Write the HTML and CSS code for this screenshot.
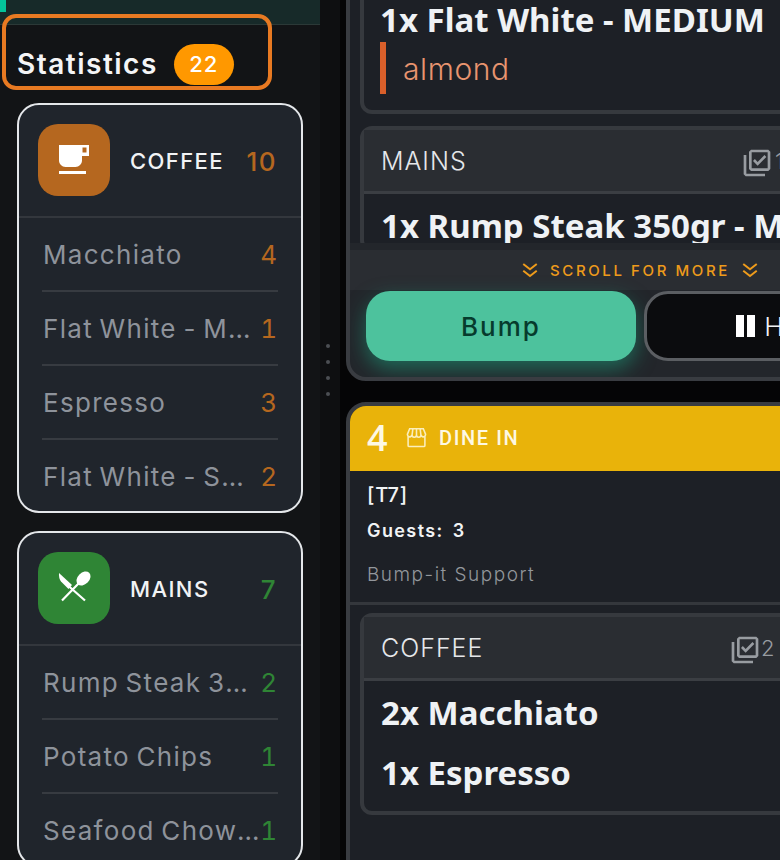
FILE: index.html
```html
<!DOCTYPE html>
<html lang="en">
<head>
<meta charset="utf-8">
<title>Kitchen display</title>
<link rel="stylesheet" href="styles.css">
</head>
<body>
<div class="app">
  <aside class="side">
    <div class="topbar"><span class="topmark"></span></div>
    <div class="focus-ring"></div>
    <div class="title"><span class="title-text">Statistics</span><span class="pill">22</span></div>
    <section class="stat">
      <header class="stat-hd">
        <span class="tile tile-coffee">
          <svg class="tile-svg" viewBox="0 0 36 36"><path fill-rule="evenodd" fill="#fff" d="M3 3H33V14H26V18.500C26 22 23 25 19.500 25H9.500C6 25 3 22 3 18.500ZM26.500 5.500V10.500H30.500V5.500Z"/><rect x="3" y="29" width="27" height="3" fill="#fff"/></svg>
        </span>
        <span class="stat-name">COFFEE</span>
        <span class="stat-total c-coffee">10</span>
      </header>
      <div class="row"><span class="row-name">Macchiato</span><span class="row-num c-coffee">4</span></div>
      <div class="row"><span class="row-name">Flat White - MEDIUM</span><span class="row-num c-coffee">1</span></div>
      <div class="row"><span class="row-name">Espresso</span><span class="row-num c-coffee">3</span></div>
      <div class="row"><span class="row-name">Flat White - SMALL</span><span class="row-num c-coffee">2</span></div>
    </section>
    <section class="stat">
      <header class="stat-hd">
        <span class="tile tile-mains">
          <svg class="tile-svg" viewBox="0 0 36 36"><ellipse cx="27.500" cy="8.500" rx="8" ry="5.800" transform="rotate(-45 27.500 8.500)" fill="#fff"/><path d="M23 13L6 30.500M12 15.500L29 30.500" stroke="#fff" stroke-width="2.200" fill="none"/><path d="M3 3L16 15L12.500 19L5 11.500Q2.500 8 3 3Z" fill="#fff"/></svg>
        </span>
        <span class="stat-name">MAINS</span>
        <span class="stat-total c-mains">7</span>
      </header>
      <div class="row"><span class="row-name">Rump Steak 350gr - MEDIUM</span><span class="row-num c-mains">2</span></div>
      <div class="row"><span class="row-name">Potato Chips</span><span class="row-num c-mains">1</span></div>
      <div class="row"><span class="row-name">Seafood Chowder Bowl</span><span class="row-num c-mains">1</span></div>
    </section>
    <div class="handle"><i></i><i></i><i></i><i></i></div>
  </aside>
  <main class="board">
    <article class="card card-first">
      <div class="scroll">
        <section class="group group-cut">
          <div class="item">1x Flat White - MEDIUM</div>
          <div class="mod">almond</div>
        </section>
        <section class="group">
          <header class="group-hd group-hd-wide">
            <span class="group-name">MAINS</span>
            <svg class="check" viewBox="0 0 24 24"><path fill="#989ca1" d="M20 4v12H8V4h12m.5-2h-13L6 3.500v13L7.500 18h13l1.500-1.500v-13L20.500 2zM12.470 14L9 10.500l1.400-1.410 2.070 2.080L17.600 6 19 7.410 12.470 14zM4 6H2v14.500L3.500 22H18v-2H4V6z"/></svg>
            <span class="group-count">1</span>
          </header>
          <div class="item item-first">1x Rump Steak 350gr - MEDIUM</div>
        </section>
      </div>
      <div class="more">
        <svg class="chev" viewBox="0 0 24 24"><path d="M3 4l9 7 9-7M3 13l9 7 9-7"/></svg>
        <span class="more-text">SCROLL FOR MORE</span>
        <svg class="chev" viewBox="0 0 24 24"><path d="M3 4l9 7 9-7M3 13l9 7 9-7"/></svg>
      </div>
      <div class="actions">
        <button class="btn btn-bump">Bump</button>
        <button class="btn btn-hold"><span class="pause"><i></i><i></i></span>Hold</button>
      </div>
    </article>
    <article class="card card-second">
      <header class="banner">
        <span class="banner-num">4</span>
        <svg class="store" viewBox="0 0 20 20"><path d="M2 9V17.500a1 1 0 0 0 1 1H17a1 1 0 0 0 1-1V9M3.500 1.700H16.500L18.500 6.500a2.100 2.100 0 0 1-4.250 1.200a2.100 2.100 0 0 1-4.250 0a2.100 2.100 0 0 1-4.250 0a2.100 2.100 0 0 1-4.250-1.200ZM6.500 2L5.800 7.500M10 2V7.500M13.500 2L14.200 7.500"/></svg>
        <span class="banner-type">DINE IN</span>
      </header>
      <div class="info">
        <div class="table">[T7]</div>
        <div class="guests"><span>Guests:</span><span>3</span></div>
        <div class="server">Bump-it Support</div>
      </div>
      <section class="group group-tight">
        <header class="group-hd group-hd-narrow">
          <span class="group-name">COFFEE</span>
          <svg class="check" viewBox="0 0 24 24"><path fill="#989ca1" d="M20 4v12H8V4h12m.5-2h-13L6 3.500v13L7.500 18h13l1.500-1.500v-13L20.500 2zM12.470 14L9 10.500l1.400-1.410 2.070 2.080L17.600 6 19 7.410 12.470 14zM4 6H2v14.500L3.500 22H18v-2H4V6z"/></svg>
          <span class="group-count">2</span>
        </header>
        <div class="item item-list">2x Macchiato</div>
        <div class="item item-list">1x Espresso</div>
      </section>
    </article>
  </main>
</div>
</body>
</html>
```
FILE: styles.css
```css
* { box-sizing: border-box; }
html, body { margin: 0; height: 100%; overflow: hidden; background: #050506; }
body { font-family: "Inter", "Liberation Sans", sans-serif; color: #f1f3f5; }
.app { display: flex; width: 780px; height: 860px; overflow: hidden; }

/* sidebar */
.side { position: relative; flex: 0 0 340px; height: 860px; padding-right: 20px; background: #0e0f11; overflow: hidden; }
.topbar { height: 25px; background: #172a29; border-bottom: 1px solid #2b3937; }
.topmark { display: block; width: 6px; height: 12px; background: #04c39a; }
.side::before { content: ""; position: absolute; left: 0; top: 25px; width: 320px; bottom: 0; background: #121416; }
.focus-ring { position: absolute; left: 2px; top: 14px; width: 270px; height: 76px; border: 4px solid #e87a22; border-radius: 14px; z-index: 2; }
.title { position: relative; display: flex; align-items: center; gap: 16px; height: 78px; padding-left: 17px; }
.title-text { font-size: 28px; font-weight: 600; letter-spacing: 1.500px; color: #f4f5f6; }
.pill { display: flex; align-items: center; justify-content: center; width: 60px; height: 41px; border-radius: 21px; background: #ff9800; font-size: 22px; font-weight: 500; letter-spacing: 1px; color: #fff; }
.stat { position: relative; width: 286px; margin: 0 0 18px 17px; background: #20252c; border: 2px solid #e4e7ea; border-radius: 22px; }
.stat-hd { display: flex; align-items: center; height: 113px; padding: 0 24px 2px 19px; border-bottom: 2px solid #33373d; }
.tile { display: flex; align-items: center; justify-content: center; flex: none; width: 72px; height: 72px; border-radius: 20px; }
.tile-coffee { background: #b5671f; }
.tile-mains { background: #2f8535; }
.tile-svg { width: 36px; height: 36px; }
.stat-name { margin: 2px 0 0 20px; font-size: 22px; font-weight: 500; letter-spacing: 1.400px; color: #f1f3f5; }
.stat-total { margin: 3px 0 0 auto; font-size: 26px; font-weight: 500; letter-spacing: 1.500px; }
.c-coffee { color: #b5671f; }
.c-mains { color: #2f8535; }
.row { display: flex; align-items: center; height: 74px; margin: 0 23px; padding: 0 1px; border-bottom: 2px solid #373b41; font-size: 26px; letter-spacing: 1.300px; word-spacing: -2px; color: #8e939b; }
.row:last-child { height: 71px; padding-top: 2px; border-bottom: 0; }
.row-name { flex: 1; min-width: 0; overflow: hidden; white-space: nowrap; text-overflow: ellipsis; }
.row-num { flex: none; letter-spacing: 0; font-weight: 400; font-variant-numeric: tabular-nums; }
.handle { position: absolute; left: 326px; top: 344px; display: flex; flex-direction: column; gap: 12px; }
.handle i { display: block; width: 4px; height: 4px; border-radius: 50%; background: #4b4e53; }

/* board */
.board { flex: 0 0 auto; width: 594px; padding-left: 6px; }
.card { width: 588px; background: #1d2026; border: 4px solid #393c41; border-radius: 20px; overflow: hidden; }
.card-first { height: 411px; margin-top: -30px; background: #23262b; }
.card-second { margin-top: 21px; height: 600px; }
.scroll { height: 269px; margin-bottom: 7px; padding: 0 10px; overflow: hidden; background: #1d2026; }
.group { background: #1d2026; border: 4px solid #36393e; border-radius: 12px; }
.group-cut { height: 140px; margin-bottom: 12px; padding: 24px 16px 0; border-top: 0; border-radius: 0 0 12px 12px; }
.group-tight { height: 202px; margin: 8px 10px 0; }
.group-hd { display: flex; align-items: center; height: 64px; padding-left: 17px; background: #2a2d32; border-bottom: 3px solid #3b3e43; }
.group-hd-wide { padding-right: 129px; }
.group-hd-wide .group-count { margin-left: 2px; }
.group-hd-narrow { padding-right: 143px; }
.group-name { margin-right: auto; font-size: 25px; font-weight: 300; letter-spacing: 1px; color: #e5e7ea; }
.check { width: 32px; height: 32px; flex: none; margin-top: 4px; }
.group-count { width: 12px; font-size: 22px; font-weight: 300; color: #989ca1; }
.item { font-family: "Noto Sans", "Open Sans", sans-serif; font-size: 33px; font-weight: 700; line-height: 44px; color: #eff2f5; white-space: nowrap; }
.item-first { padding: 10px 0 0 17px; }
.item-list { padding-left: 17px; height: 60px; line-height: 60px; }
.group-hd + .item-list { margin-top: 2px; }
.mod { height: 52px; padding-left: 17px; border-left: 6px solid #d95f2a; font-size: 30px; font-weight: 300; line-height: 54px; letter-spacing: .6px; color: #e8946f; }
.more { display: flex; align-items: center; justify-content: center; gap: 11px; height: 40px; background: #2a2d32; }
.chev { width: 18px; height: 18px; fill: none; stroke: #ee9b1b; stroke-width: 2.600; }
.more-text { font-size: 15px; font-weight: 500; letter-spacing: 2.600px; color: #ee9b1b; }
.actions { display: flex; gap: 9px; padding: 1px 15px 0 16px; }
.btn { display: flex; align-items: center; justify-content: center; flex: none; width: 270px; height: 70px; border-radius: 24px; font-family: inherit; font-size: 26px; }
.btn-bump { border: 0; background: #4dc29d; color: #063b2d; font-weight: 500; letter-spacing: 2px; box-shadow: 0 8px 20px rgba(28, 150, 118, .6); }
.btn-hold { gap: 9px; margin-left: -1px; padding-left: 7px; border: 3px solid #5b5e62; background: #0b0c0e; color: #f1f3f5; font-weight: 300; letter-spacing: .5px; }
.pause { display: flex; gap: 3px; }
.pause i { display: block; width: 8px; height: 22px; background: #fff; }
.banner { display: flex; align-items: center; height: 65px; padding-left: 17px; background: #e9b30a; color: #fdf8e4; }
.banner-num { width: 39px; margin-top: -2px; font-family: "Open Sans", sans-serif; font-size: 36px; font-weight: 600; }
.store { width: 21px; height: 21px; flex: none; margin-top: -2px; fill: none; stroke: #fbeebb; stroke-width: 1.500; }
.banner-type { margin-left: 12px; margin-top: -2px; font-family: "Roboto", sans-serif; font-size: 20px; font-weight: 500; letter-spacing: 1.600px; }
.info { height: 134px; padding: 10px 17px 0; border-bottom: 3px solid #34373c; }
.table { font-size: 20px; line-height: 28px; font-weight: 500; letter-spacing: .8px; color: #f1f3f5; }
.guests { display: flex; gap: 9px; margin-top: 8px; font-size: 18px; line-height: 28px; font-weight: 600; letter-spacing: 1.400px; color: #f1f3f5; }
.server { margin-top: 16px; font-size: 19px; line-height: 28px; font-weight: 300; letter-spacing: 1.500px; color: #93979c; }
```
